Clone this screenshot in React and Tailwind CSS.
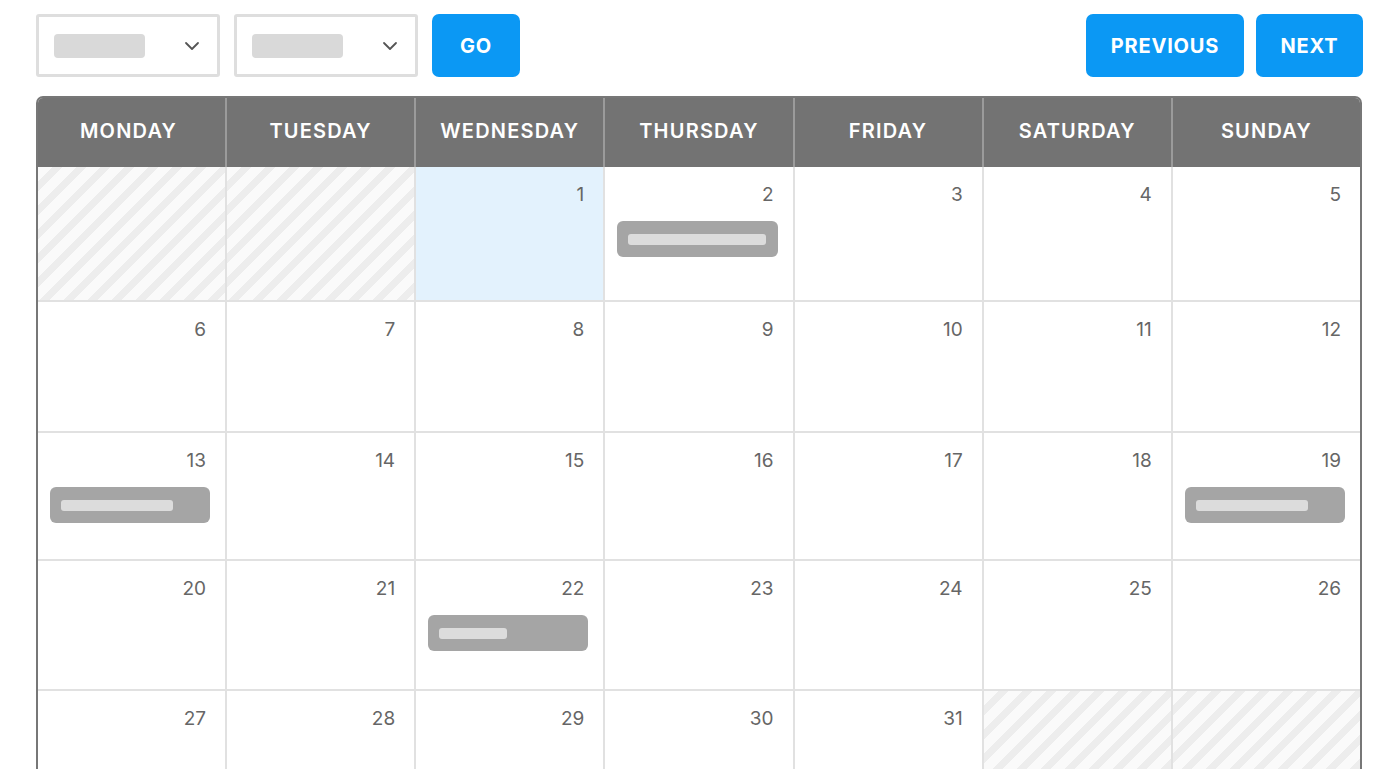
import React from 'react';

// ── Calendar data ─────────────────────────────────────────────────────────
const DAYS = ['MONDAY', 'TUESDAY', 'WEDNESDAY', 'THURSDAY', 'FRIDAY', 'SATURDAY', 'SUNDAY'];

// null = filler cell (striped), numbers = day of month
const CELLS = [
  null, null, 1, 2, 3, 4, 5,
  6, 7, 8, 9, 10, 11, 12,
  13, 14, 15, 16, 17, 18, 19,
  20, 21, 22, 23, 24, 25, 26,
  27, 28, 29, 30, 31, null, null,
];

// Event placeholder bars: day -> inner line width
const EVENTS = { 2: 'w-[138px]', 13: 'w-[112px]', 19: 'w-[112px]', 22: 'w-[68px]' };

const ROW_HEIGHTS = ['h-[133px]', 'h-[131px]', 'h-[128px]', 'h-[130px]', 'h-[130px]'];

const Select = () => (
  <div className="w-[184px] h-[63px] border-[3px] border-[#dedede] rounded-[3px] bg-white flex items-center justify-between pl-[15px] pr-[17px]">
    <div className="w-[91px] h-[24px] rounded-[4px] bg-[#d9d9d9]" />
    <svg width="16" height="10" viewBox="0 0 16 10" fill="none">
      <path d="M2 2l6 6 6-6" stroke="#555" strokeWidth="1.8" strokeLinecap="round" strokeLinejoin="round" />
    </svg>
  </div>
);

const BlueButton = ({ children, className }) => (
  <button className={`h-[63px] rounded-[7px] bg-[#0b98f4] text-white font-bold text-[20px] tracking-[0.8px] ${className}`}>
    {children}
  </button>
);

const App = () => {
  return (
    <div className="w-[1398px] h-[769px] overflow-hidden bg-white px-[36px] pt-[14px] font-['Inter',sans-serif]">

      {/* ── Toolbar ─────────────────────────────────────────────────── */}
      <div className="flex items-center justify-between">
        <div className="flex items-center gap-[14px]">
          <Select />
          <Select />
          <BlueButton className="w-[88px]">GO</BlueButton>
        </div>
        <div className="flex items-center gap-[12px] mr-[-1px]">
          <BlueButton className="w-[158px]">PREVIOUS</BlueButton>
          <BlueButton className="w-[107px]">NEXT</BlueButton>
        </div>
      </div>

      {/* ── Calendar grid ───────────────────────────────────────────── */}
      <div className="mt-[19px] w-[1326px] border-x-2 border-t-2 border-[#777] rounded-t-[7px] overflow-hidden">

        {/* Header row */}
        <div className="grid grid-cols-[187px_repeat(6,1fr)] bg-[#737373] h-[69px]">
          {DAYS.map((d, i) => (
            <div
              key={d}
              className={`flex items-center justify-center pb-[3px] text-white font-semibold text-[20px] tracking-[1.2px] ${i > 0 ? 'border-l-2 border-[#9b9b9b]' : 'pr-[6px]'}`}
            >
              {d}
            </div>
          ))}
        </div>

        {/* Day cells */}
        <div className="grid grid-cols-[187px_repeat(6,1fr)]">
          {CELLS.map((day, idx) => {
            const col = idx % 7;
            const row = Math.floor(idx / 7);
            const filler = day === null;
            const today = day === 1;
            return (
              <div
                key={idx}
                className={`${ROW_HEIGHTS[row]} ${row > 0 ? 'border-t-2' : ''} ${col > 0 ? 'border-l-2' : ''} border-[#e1e1e1] ${
                  filler
                    ? 'bg-[repeating-linear-gradient(135deg,#fafafa_0px,#fafafa_10px,#ededed_10px,#ededed_17px)]'
                    : today
                    ? 'bg-[#e3f2fd]'
                    : 'bg-white'
                }`}
              >
                {!filler && (
                  <div className="text-right pr-[19px] pt-[14px] text-[19px] leading-[28px] text-[#666]">
                    {day}
                  </div>
                )}
                {EVENTS[day] && (
                  <div className="ml-[12px] mr-[15px] mt-[12px] h-[36px] rounded-[6px] bg-[#a5a5a5] flex items-center px-[11px]">
                    <div className={`${EVENTS[day]} h-[11px] rounded-[3px] bg-[#dcdcdc]`} />
                  </div>
                )}
              </div>
            );
          })}
        </div>
      </div>
    </div>
  );
};

export default App;
